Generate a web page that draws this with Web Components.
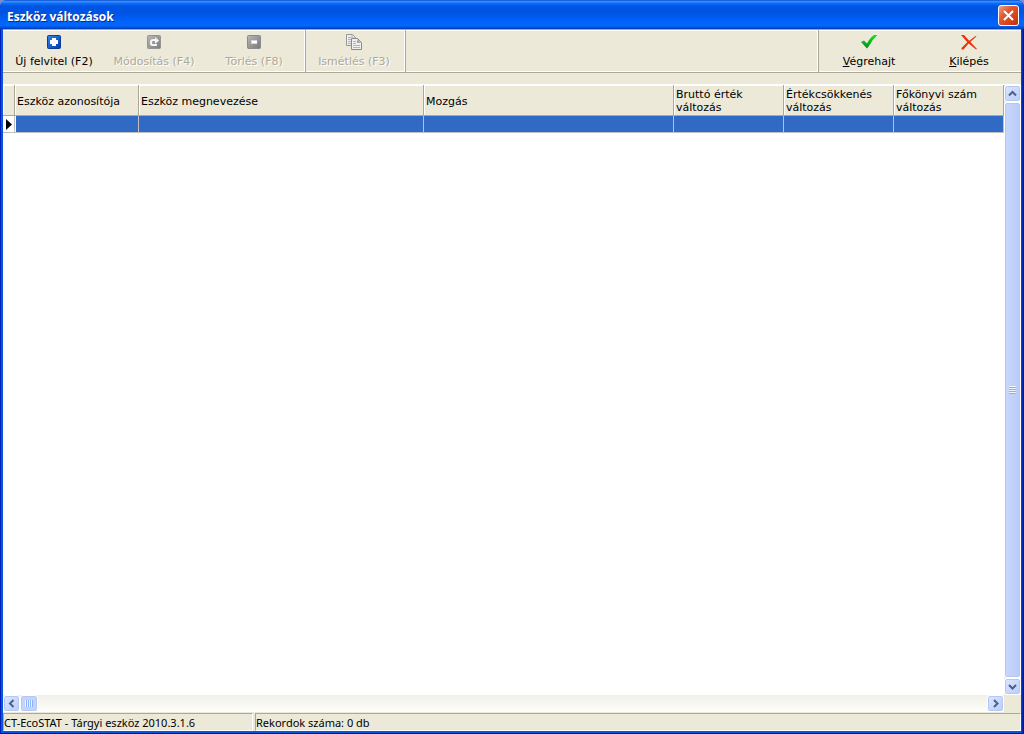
<!DOCTYPE html>
<html lang="hu">
<head>
<meta charset="utf-8">
<title>Eszköz változások</title>
<style>
html, body { height: 100%; margin: 0; }
body { background: #7b8fd0; font: 11px/13px "DejaVu Sans", Verdana, sans-serif; color: #000; overflow: hidden; }
</style>
</head>
<body>
<app-window caption="Eszköz változások">
  <tool-bar slot="toolbar">
    <tool-button icon="add">Új felvitel (F2)</tool-button>
    <tool-button icon="edit" disabled>Módosítás (F4)</tool-button>
    <tool-button icon="remove" disabled divider>Törlés (F8)</tool-button>
    <tool-button icon="copy" disabled divider>Ismétlés (F3)</tool-button>
    <tool-button slot="end" icon="ok" key="V">égrehajt</tool-button>
    <tool-button slot="end" icon="exit" key="K">ilépés</tool-button>
  </tool-bar>
  <record-grid></record-grid>
  <status-bar slot="status">
    <span>CT-EcoSTAT - Tárgyi eszköz 2010.3.1.6</span>
    <span slot="count">Rekordok száma: 0 db</span>
  </status-bar>
</app-window>

<script>
const ICONS = {
  add: `<svg width="16" height="16" viewBox="0 0 16 16"><defs><linearGradient id="g" x2="1" y2="1"><stop stop-color="#2f86ee"/><stop offset="1" stop-color="#0739a8"/></linearGradient></defs><rect x="1.5" y="1.5" width="13" height="13" rx="1" fill="url(#g)" stroke="#0b3c9c"/><path d="M6 4h4v2h2v4h-2v2H6v-2H4V6h2z" fill="#fff"/></svg>`,
  edit: `<svg width="16" height="16" viewBox="0 0 16 16"><defs><linearGradient id="g" x2="1" y2="1"><stop stop-color="#b8b8b8"/><stop offset="1" stop-color="#7c7c7c"/></linearGradient></defs><rect x="1.5" y="1.5" width="13" height="13" rx="1" fill="url(#g)" stroke="#949494"/><path d="M11 11H6.500Q5 11 5 9.500V8Q5 6 7 6h3" fill="none" stroke="#f4f4f4" stroke-width="2"/><path d="M9 3l4 3.500L9 10z" fill="#f4f4f4"/></svg>`,
  remove: `<svg width="16" height="16" viewBox="0 0 16 16"><defs><linearGradient id="g" x2="1" y2="1"><stop stop-color="#b8b8b8"/><stop offset="1" stop-color="#777"/></linearGradient></defs><rect x="1.5" y="1.5" width="13" height="13" rx="1" fill="url(#g)" stroke="#8a8a8a"/><path d="M5 6h6v4H5z" fill="#d5d5d5"/><path d="M6 7h5v2H6z" fill="#fff"/></svg>`,
  copy: `<svg width="16" height="16" viewBox="0 0 16 16"><path d="M.5.500h6l3 3v8h-9z" fill="#efefef" stroke="#979797"/><path d="M6 1v3h3M2 3.500h3M2 5.500h4M2 7.500h4M2 9.500h3" fill="none" stroke="#b0b0b0"/><path d="M5.500 4.500h6l4 4v7h-10z" fill="#efefef" stroke="#8b8b8b"/><path d="M11 5v4h4z" fill="#a5a5a5"/><path d="M7 7.500h3M7 9.500h3M7 11.500h7M7 13.500h7" stroke="#b5b5b5"/></svg>`,
  ok: `<svg width="16" height="16" viewBox="0 0 16 16"><defs><linearGradient id="g" x2="0" y2="1"><stop stop-color="#14e414"/><stop offset="1" stop-color="#008c26"/></linearGradient></defs><path d="M0 8 3 6.500 6 9.500Q9 3.500 13 1h3.500Q11 5.500 8 12l-2 2.500z" fill="url(#g)"/></svg>`,
  exit: `<svg width="16" height="16" viewBox="0 0 16 16" fill="#e8330c"><path d="M0 1h3l5 5.500 8 8.500-1 .5-8-6.500z"/><path d="M15.500 2.500 14.500 2 6 8.500.500 14v1.500h2L8 9z"/></svg>`
};

class BaseElement extends HTMLElement {
  connectedCallback() {
    if (!this.shadowRoot) this.attachShadow({ mode: "open" }).innerHTML = this.render();
  }
}

customElements.define("app-window", class extends BaseElement {
  render() {
    return `<style>
      :host { display: flex; flex-direction: column; box-sizing: border-box; height: 100vh; padding: 0 3px 3px;
        background: linear-gradient(#00138c, #00138c) bottom / 100% 1px no-repeat, linear-gradient(90deg, #0020b8 0 1px, #0855e0 1px 3px, #0855e0 calc(100% - 3px), #0030c8 calc(100% - 2px), #00138c 100%);
        border-radius: 7px 7px 0 0; overflow: hidden; }
      header { display: flex; flex: none; align-items: center; justify-content: space-between; height: 29px; margin: 0 -3px; padding: 2px 5px 0 7px; box-sizing: border-box;
        background: linear-gradient(#0a4fd0 0, #3c94ff 6%, #0a6af8 12%, #0054e3 22%, #0054e3 45%, #0062fa 72%, #0068ff 88%, #0048c8 97%, #003ab0 100%); }
      h1 { margin: 0; padding-top: 2px; font: bold 12px/16px "Open Sans", "Noto Sans", sans-serif; color: #fff; text-shadow: 1px 1px #0a2a83; }
      button { width: 21px; height: 21px; padding: 0; border: 1px solid #fff; border-radius: 3px; background: linear-gradient(135deg, #f0a088, #e25a35 35%, #d03c12 80%, #b83210); }
      svg { display: block; margin: auto; }
      main { display: flex; flex: 1; flex-direction: column; min-height: 0; background: #ece9d8; }
    </style>
    <header><h1>${this.getAttribute("caption")}</h1>
      <button aria-label="Bezárás"><svg width="13" height="13" viewBox="0 0 13 13"><path d="m2 2 9 9m0-9-9 9" stroke="#fff" stroke-width="2"/></svg></button></header>
    <main><slot name="toolbar"></slot><slot></slot><slot name="status"></slot></main>`;
  }
});

customElements.define("tool-bar", class extends BaseElement {
  render() {
    return `<style>
      :host { display: flex; flex: none; justify-content: space-between; height: 44px; box-sizing: border-box; padding: 0 1px; margin-bottom: 11px;
        border-top: 1px solid #aca899; border-bottom: 1px solid #aca899; box-shadow: inset 0 1px #fff, inset 0 -1px #fff; }
      div { display: flex; }
      .end { border-left: 1px solid #fff; box-shadow: inset 1px 0 #aca899; padding: 0 1px; }
    </style><div><slot></slot></div><div class="end"><slot name="end"></slot></div>`;
  }
});

customElements.define("tool-button", class extends BaseElement {
  render() {
    const key = this.getAttribute("key");
    return `<style>
      :host { display: block; width: 100px; }
      :host([divider]) { width: 102px; margin-right: -2px; box-shadow: inset -1px 0 #aca899, inset -2px 0 #fff; }
      button { display: flex; flex-direction: column; align-items: center; gap: 5px; width: 100px; padding: 4px 0 0; border: 0; background: none; color: inherit; font: inherit; white-space: nowrap; }
      button:disabled { color: #aca899; text-shadow: 1px 1px #fff; }
      svg { display: block; }
    </style><button ${this.hasAttribute("disabled") ? "disabled" : ""}>${ICONS[this.getAttribute("icon")]}<span>${key ? `<u>${key}</u>` : ""}<slot></slot></span></button>`;
  }
});

customElements.define("scroll-bar", class extends BaseElement {
  render() {
    const v = this.hasAttribute("vertical");
    const arrow = d => `<svg width="9" height="9" viewBox="0 0 9 9"><path d="${d}" fill="none" stroke="#4d6185" stroke-width="2"/></svg>`;
    return `<style>
      :host { display: flex; box-sizing: border-box; height: 17px; background: linear-gradient(#f1f0e8, #fefefb); }
      :host([vertical]) { flex-direction: column; width: 17px; height: auto; background: linear-gradient(90deg, #eeede5, #fefefb); }
      button, .thumb { display: flex; flex: none; align-items: center; justify-content: center; box-sizing: border-box; width: 17px; height: 17px; padding: 0;
        border: 1px solid #fff; border-radius: 3px; background: linear-gradient(135deg, #dce6ff, #b9cdfb); box-shadow: inset 0 0 0 1px #b4c8f6; }
      .thumb { width: 18px; background: #c2d3fc; }
      :host([vertical]) .thumb { flex: 1; width: 17px; height: auto; background: linear-gradient(90deg, #c9d7fd, #b9cbf8); }
      .grip { width: 8px; height: 7px; background: repeating-linear-gradient(90deg, #eef4fe 0 1px, #8cb0f8 1px 2px); }
      :host([vertical]) .grip { width: 7px; height: 8px; background: repeating-linear-gradient(#eef4fe 0 1px, #8cb0f8 1px 2px); }
      .rest { flex: 1; }
      :host([vertical]) .rest { display: none; }
    </style><button aria-label="Vissza">${arrow(v ? "M1 6.500 4.500 3 8 6.500" : "M6.500 1 3 4.500 6.500 8")}</button><div class="thumb"><div class="grip"></div></div><div class="rest"></div><button aria-label="Előre">${arrow(v ? "M1 3 4.500 6.500 8 3" : "M3 1l3.500 3.500L3 8")}</button>`;
  }
});

customElements.define("record-grid", class extends BaseElement {
  render() {
    return `<style>
      :host { display: grid; flex: 1; grid-template: 1fr 18px / 1fr 17px; min-height: 0; border-top: 1px solid #fff; }
      .view { background: #fff; overflow: hidden; min-width: 0; }
      table { width: 100%; table-layout: fixed; border-collapse: separate; border-spacing: 0; }
      th { height: 31px; box-sizing: border-box; padding: 2px 2px 0; border: solid #aca899; border-width: 0 1px 1px 0; box-shadow: inset 1px 1px #fff; background: #ece9d8; font-weight: normal; text-align: left; vertical-align: middle; }
      td { height: 17px; box-sizing: border-box; padding: 0; border: solid #c0c0c0; border-width: 0 1px 1px 0; background: #316ac5; }
      td.mark { background: #fff; }
      td.mark + td { box-shadow: inset 1px 0 #fff; }
      td svg { display: block; margin-left: 3px; }
      .i { width: 12px; } .a { width: 124px; } .b { width: 285px; } .c { width: 250px; } .d { width: 110px; }
    </style>
    <div class="view"><table>
      <colgroup><col class="i"><col class="a"><col class="b"><col class="c"><col class="d"><col class="d"><col></colgroup>
      <thead><tr><th></th><th>Eszköz azonosítója</th><th>Eszköz megnevezése</th><th>Mozgás</th><th>Bruttó érték változás</th><th>Értékcsökkenés változás</th><th>Főkönyvi szám változás</th></tr></thead>
      <tbody><tr><td class="mark"><svg width="6" height="11" viewBox="0 0 6 11"><path d="M0 0 6 5.500 0 11z"/></svg></td><td></td><td></td><td></td><td></td><td></td><td></td></tr></tbody>
    </table></div>
    <scroll-bar vertical></scroll-bar>
    <scroll-bar></scroll-bar>`;
  }
});

customElements.define("status-bar", class extends BaseElement {
  render() {
    return `<style>
      :host { display: flex; flex: none; gap: 2px; height: 18px; font: 11px/17px "Noto Sans", "Open Sans", sans-serif; white-space: nowrap; }
      div { box-sizing: border-box; border: 1px solid #fff; border-top-color: #aca899; border-left-color: #aca899; }
      .app { width: 250px; } .count { flex: 1; }
    </style><div class="app"><slot></slot></div><div class="count"><slot name="count"></slot></div>`;
  }
});
</script>
</body>
</html>
